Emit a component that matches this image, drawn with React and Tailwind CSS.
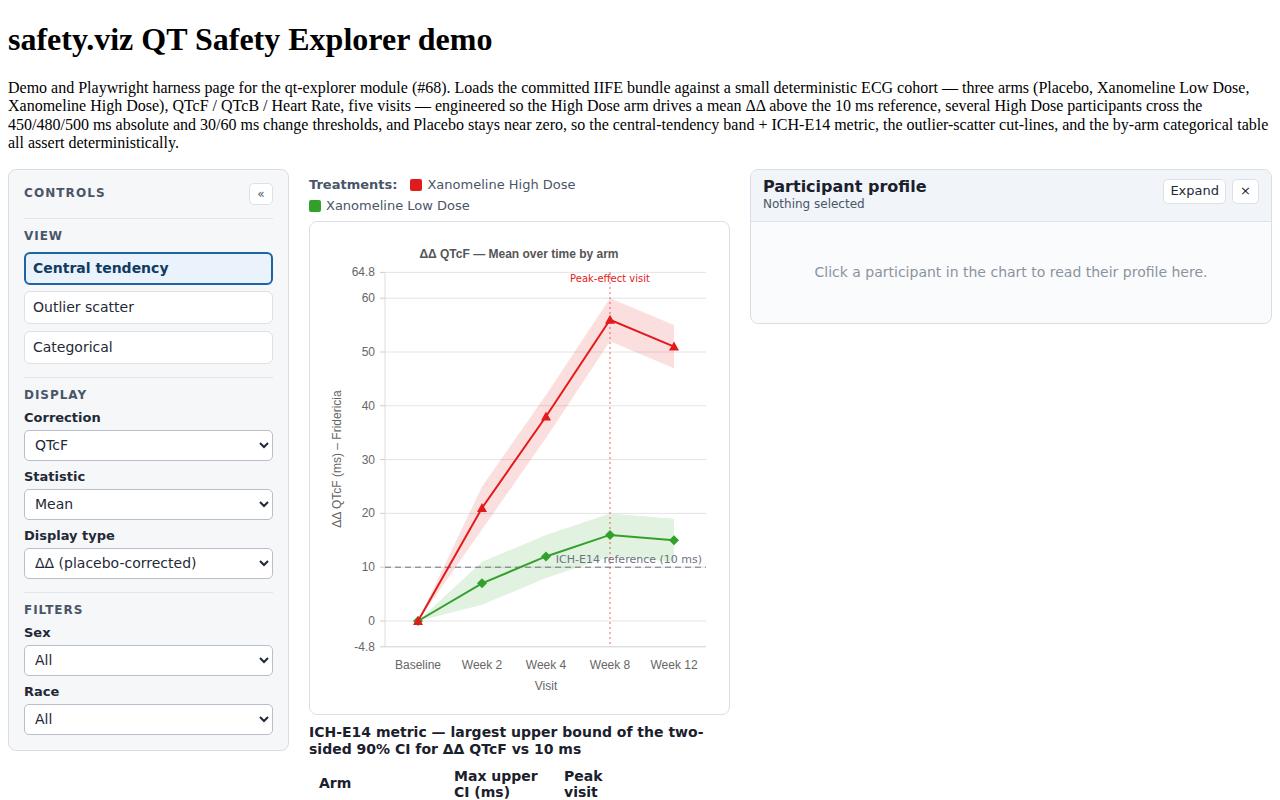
import { useState } from "react";

const VISITS = ["Baseline", "Week 2", "Week 4", "Week 8", "Week 12"];
const XS = [418, 482, 546, 610, 674];
const yOf = (v) => 621 - v * 5.38;

const ARMS = [
  {
    name: "Xanomeline High Dose",
    color: "#e31a1c",
    marker: "triangle",
    mean: [0, 21, 38, 56, 51],
    lo: [0, 17, 34, 52, 47],
    hi: [0, 25, 42, 60, 55],
  },
  {
    name: "Xanomeline Low Dose",
    color: "#33a02c",
    marker: "diamond",
    mean: [0, 7, 12, 16, 15],
    lo: [0, 3, 8, 12, 11],
    hi: [0, 11, 16, 20, 19],
  },
];

const TICKS = [64.8, 60, 50, 40, 30, 20, 10, 0, -4.8];

function Marker({ type, x, y, color }) {
  if (type === "triangle") {
    return <polygon points={`${x},${y - 5} ${x + 5},${y + 4} ${x - 5},${y + 4}`} fill={color} />;
  }
  return <polygon points={`${x},${y - 5} ${x + 5},${y} ${x},${y + 5} ${x - 5},${y}`} fill={color} />;
}

function Chart() {
  return (
    <svg width="419" height="492" className="block">
      <g transform="translate(-310,-222)">
        <text x="519" y="258" textAnchor="middle" fontSize="12" fontWeight="bold" fill="#555" fontFamily="'Liberation Sans', Arial, sans-serif">
          ΔΔ QTcF — Mean over time by arm
        </text>

        {/* grid + y ticks */}
        {TICKS.map((t) => (
          <g key={t}>
            <line x1="385" x2="706" y1={yOf(t)} y2={yOf(t)} stroke={t === -4.8 ? "#cfcfcf" : "#e3e3e3"} strokeWidth="1" />
            <line x1="380" x2="385" y1={yOf(t)} y2={yOf(t)} stroke="#cfcfcf" />
            <text x="375" y={yOf(t) + 4} textAnchor="end" fontSize="12" fill="#666" fontFamily="'Liberation Sans', Arial, sans-serif">
              {t}
            </text>
          </g>
        ))}
        <line x1="385" x2="385" y1="272" y2="647" stroke="#dcdcdc" />

        {/* x labels */}
        {VISITS.map((v, i) => (
          <text key={v} x={XS[i]} y="669" textAnchor="middle" fontSize="12" fill="#666" fontFamily="'Liberation Sans', Arial, sans-serif">
            {v}
          </text>
        ))}
        <text x="546" y="690" textAnchor="middle" fontSize="12" fill="#666" fontFamily="'Liberation Sans', Arial, sans-serif">
          Visit
        </text>
        <text
          transform="translate(341,459) rotate(-90)"
          textAnchor="middle"
          fontSize="12"
          fill="#666"
          fontFamily="'Liberation Sans', Arial, sans-serif"
        >
          ΔΔ QTcF (ms) – Fridericia
        </text>

        {/* bands */}
        {ARMS.map((a) => {
          const top = a.hi.map((v, i) => `${XS[i]},${yOf(v)}`);
          const bot = a.lo.map((v, i) => `${XS[i]},${yOf(v)}`).reverse();
          return <polygon key={a.name + "band"} points={[...top, ...bot].join(" ")} fill={a.color} fillOpacity="0.14" />;
        })}

        {/* reference line */}
        <line x1="385" x2="706" y1={yOf(10)} y2={yOf(10)} stroke="#6b7280" strokeDasharray="6 4" />
        <text x="702" y="563" textAnchor="end" fontSize="11" fill="#6b7280" fontFamily="'DejaVu Sans', sans-serif">
          ICH-E14 reference (10 ms)
        </text>

        {/* peak line */}
        <line x1="610" x2="610" y1="272" y2="647" stroke="#e31a1c" strokeOpacity="0.45" strokeWidth="1.5" strokeDasharray="2 3" />
        <text x="610" y="282" textAnchor="middle" fontSize="10" fill="#e31a1c" fontFamily="'DejaVu Sans', sans-serif">
          Peak-effect visit
        </text>

        {/* lines */}
        {ARMS.slice().reverse().map((a) => (
          <g key={a.name}>
            <polyline
              points={a.mean.map((v, i) => `${XS[i]},${yOf(v)}`).join(" ")}
              fill="none"
              stroke={a.color}
              strokeWidth="2"
            />
            {a.mean.map((v, i) => (
              <Marker key={i} type={a.marker} x={XS[i]} y={yOf(v)} color={a.color} />
            ))}
          </g>
        ))}
      </g>
    </svg>
  );
}

function SelectField({ label, options, className = "" }) {
  return (
    <div className={className}>
      <div className="text-[13px] font-bold leading-4 text-[#1f2937]">{label}</div>
      <select className="mt-1 block h-[31px] w-full rounded-[5px] border border-[#b8bfca] bg-white pl-[6px] text-[14px] text-[#1f2937]">
        {options.map((o) => (
          <option key={o}>{o}</option>
        ))}
      </select>
    </div>
  );
}

function Controls() {
  const [view, setView] = useState("Central tendency");
  return (
    <aside className="w-[281px] shrink-0 rounded-lg border border-[#d9dee5] bg-[#f6f7f9] px-[15px] pb-[15px] pt-[13px]">
      <div className="flex h-[22px] items-center justify-between">
        <span className="-mt-[2px] text-[12px] font-bold uppercase tracking-[0.09em] text-[#4a5568]">Controls</span>
        <button className="flex h-[22px] w-[24px] items-center justify-center rounded-[5px] border border-[#dde1e7] bg-white text-[12px] leading-none text-[#4a5568]">
          «
        </button>
      </div>
      <div className="my-[13px] h-px bg-[#e1e5ea]" />
      <div className="mt-[-4px] text-[12px] font-bold uppercase leading-4 tracking-[0.08em] text-[#4a5568]">View</div>
      <div className="mt-[8px] flex flex-col gap-[6.5px]">
        {["Central tendency", "Outlier scatter", "Categorical"].map((v) =>
          view === v ? (
            <button
              key={v}
              onClick={() => setView(v)}
              className="h-[33px] rounded-md border-2 border-[#1f63a3] bg-[#eaf2fb] px-[7px] text-left text-[14px] font-bold text-[#123b61]"
            >
              {v}
            </button>
          ) : (
            <button
              key={v}
              onClick={() => setView(v)}
              className="h-[33px] rounded-md border border-[#dde1e7] bg-white px-[8px] text-left text-[14px] text-[#1f2937]"
            >
              {v}
            </button>
          )
        )}
      </div>
      <div className="my-[13px] h-px bg-[#e1e5ea]" />
      <div className="mt-[-4px] text-[12px] font-bold uppercase leading-4 tracking-[0.08em] text-[#4a5568]">Display</div>
      <SelectField className="mt-[7px]" label="Correction" options={["QTcF", "QTcB", "Heart Rate"]} />
      <SelectField className="mt-[8px]" label="Statistic" options={["Mean", "Median"]} />
      <SelectField className="mt-[8px]" label="Display type" options={["ΔΔ (placebo-corrected)", "Δ (change from baseline)", "Absolute"]} />
      <div className="my-[13px] h-px bg-[#e1e5ea]" />
      <div className="mt-[-4px] text-[12px] font-bold uppercase leading-4 tracking-[0.08em] text-[#4a5568]">Filters</div>
      <SelectField className="mt-[7px]" label="Sex" options={["All", "F", "M"]} />
      <SelectField className="mt-[8px]" label="Race" options={["All", "White", "Black or African American"]} />
    </aside>
  );
}

function ProfilePanel() {
  return (
    <section className="min-w-0 flex-1 overflow-hidden rounded-lg border border-[#d9dee5] bg-[#fafbfc]">
      <div className="flex items-start justify-between border-b border-[#dfe3e9] bg-[#f1f4f8] px-3 pb-[10px] pt-[7px]">
        <div>
          <div className="text-[16px] font-bold leading-5 text-[#1a202c]">Participant profile</div>
          <div className="text-[12px] leading-[14px] text-[#4a5568]">Nothing selected</div>
        </div>
        <div className="mt-[2px] flex gap-[6px]">
          <button className="h-[25px] rounded-[5px] border border-[#dde1e7] bg-white px-[6px] text-[13px] text-[#1f2937]">Expand</button>
          <button className="h-[25px] w-[27px] rounded-[5px] border border-[#dde1e7] bg-white text-[13px] text-[#1f2937]">×</button>
        </div>
      </div>
      <p className="pb-[41px] pt-[40px] text-center text-[14px] leading-5 text-[#8a94a1]">
        Click a participant in the chart to read their profile here.
      </p>
    </section>
  );
}

export default function App() {
  return (
    <div className="bg-white px-2 font-['Liberation_Serif',serif] text-black">
      <h1 className="mb-[21px] pt-[21px] text-[32px] font-bold leading-[37px]">safety.viz QT Safety Explorer demo</h1>
      <p className="text-[16px] leading-[18.4px]">
        Demo and Playwright harness page for the qt-explorer module (#68). Loads the committed IIFE bundle against a small
        deterministic ECG cohort — three arms (Placebo, Xanomeline Low Dose, Xanomeline High Dose), QTcF / QTcB / Heart
        Rate, five visits — engineered so the High Dose arm drives a mean ΔΔ above the 10 ms reference, several High Dose
        participants cross the 450/480/500 ms absolute and 30/60 ms change thresholds, and Placebo stays near zero, so the
        central-tendency band + ICH-E14 metric, the outlier-scatter cut-lines, and the by-arm categorical table all assert
        deterministically.
      </p>

      <div className="mt-4 flex items-start gap-5 font-['DejaVu_Sans',sans-serif]">
        <Controls />

        <main className="mt-[6px] w-[421px] shrink-0">
          <div className="flex flex-wrap items-center gap-x-[13px] gap-y-px text-[13px] leading-5 text-[#4a5568]">
            <span className="font-bold">Treatments:</span>
            {ARMS.map((a) => (
              <span key={a.name} className="flex items-center gap-[5px]">
                <span className="inline-block size-3 rounded-[2px]" style={{ background: a.color }} />
                {a.name}
              </span>
            ))}
          </div>
          <div className="mt-[5px] rounded-lg border border-[#dcdfe4] bg-white">
            <Chart />
          </div>
          <h3 className="mt-[9px] text-[14px] font-bold leading-[17px] text-[#1a202c]">
            ICH-E14 metric — largest upper bound of the two-sided 90% CI for ΔΔ QTcF vs 10 ms
          </h3>
          <table className="mt-[8px] text-[14px] text-[#1a202c]">
            <thead>
              <tr>
                <th className="w-[135px] px-[10px] py-[2px] text-left align-middle">Arm</th>
                <th className="w-[110px] px-[10px] py-[2px] text-left leading-4">Max upper CI (ms)</th>
                <th className="w-[70px] px-[10px] py-[2px] text-left leading-4">Peak visit</th>
              </tr>
            </thead>
          </table>
        </main>

        <ProfilePanel />
      </div>
    </div>
  );
}
